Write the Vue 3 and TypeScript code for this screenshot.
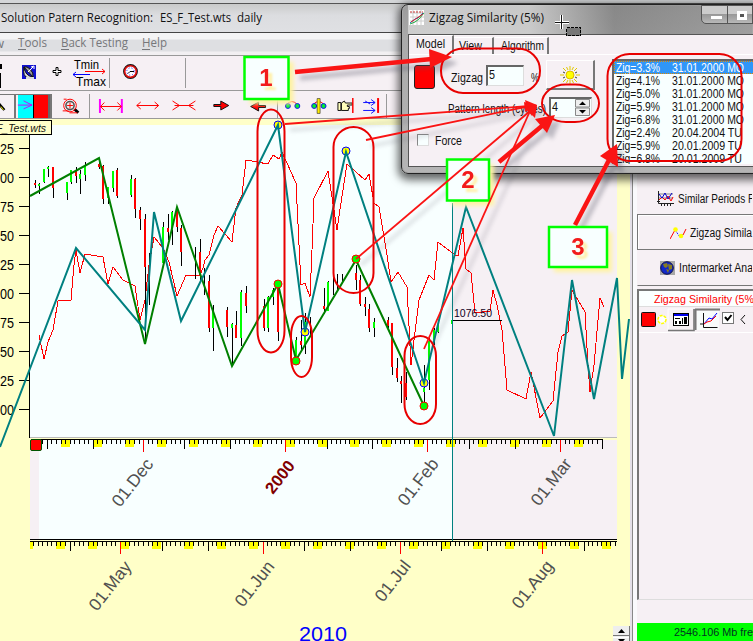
<script setup lang="ts">
import { h } from 'vue'

type FitProps = { t: string; w: number; s?: number }

// One line of text condensed or widened to a fixed width
const Fit = (p: FitProps) => {
  const s = p.s ?? 13
  return h('svg', { width: p.w, height: 16, style: 'overflow:visible;display:block;flex:none' }, [
    h('text', { x: 0, y: 12, 'font-size': s, textLength: p.w, lengthAdjust: 'spacingAndGlyphs', fill: 'currentColor' }, p.t),
  ])
}
Fit.props = ['t', 'w', 's']

const labels = ['25', '00', '75', '50', '25', '00', '75', '50', '25', '00']

// x, high, low, body top, body bottom, rising
const candles: [number, number, number, number, number, number][] = [
  [35, 180, 188, 183, 185, 0], [39, 183, 194, 184, 186, 1], [44, 169, 183, 169, 182, 1], [48, 166, 177, 167, 169, 1],
  [53, 167, 198, 167, 188, 0], [67, 182, 200, 182, 193, 1], [71, 170, 184, 170, 182, 1], [76, 167, 183, 170, 176, 0],
  [80, 170, 194, 174, 179, 1], [85, 162, 181, 165, 175, 1], [99, 162, 169, 164, 167, 0], [103, 165, 204, 166, 199, 0],
  [108, 187, 204, 187, 198, 1], [113, 171, 192, 171, 188, 1], [117, 168, 198, 170, 196, 0], [131, 175, 197, 179, 195, 1],
  [135, 178, 218, 179, 209, 0], [140, 207, 230, 210, 219, 0], [145, 214, 340, 219, 267, 0], [149, 253, 305, 265, 280, 0],
  [163, 222, 264, 227, 263, 1], [168, 214, 240, 228, 232, 0], [172, 211, 245, 212, 230, 1], [177, 207, 232, 209, 227, 0],
  [181, 225, 266, 228, 252, 0], [195, 247, 279, 262, 262, 0], [200, 239, 282, 252, 275, 0], [204, 268, 295, 275, 275, 0],
  [209, 275, 332, 281, 328, 0], [213, 305, 351, 311, 328, 1], [227, 307, 337, 310, 327, 0], [232, 323, 364, 324, 328, 1],
  [236, 311, 338, 325, 338, 0], [241, 290, 346, 292, 338, 1], [246, 286, 313, 293, 306, 0], [264, 299, 331, 306, 328, 0],
  [268, 296, 332, 297, 328, 1], [273, 288, 305, 290, 297, 1], [278, 288, 341, 288, 332, 0], [296, 337, 360, 340, 358, 1],
  [301, 320, 350, 341, 345, 0], [305, 313, 354, 322, 345, 1], [310, 317, 335, 330, 330, 0], [324, 288, 314, 306, 309, 0],
  [328, 281, 311, 282, 311, 1], [333, 277, 295, 280, 280, 0], [337, 274, 291, 280, 280, 0], [342, 274, 283, 280, 280, 0],
  [356, 265, 290, 273, 280, 0], [360, 275, 306, 280, 304, 0], [365, 297, 316, 304, 307, 0], [369, 304, 332, 309, 328, 0],
  [374, 318, 337, 322, 328, 1], [388, 317, 328, 320, 326, 0], [392, 323, 375, 323, 367, 0], [397, 358, 382, 368, 378, 0],
  [401, 376, 403, 381, 384, 0], [406, 372, 400, 383, 397, 0], [424, 365, 405, 388, 392, 1], [429, 338, 390, 341, 380, 1],
  [434, 328, 345, 330, 340, 1], [438, 322, 333, 324, 332, 1], [452, 315, 334, 320, 324, 1],
]

const pattern = '30,196 99,158 145,344 177,207 232,366 278,284 296,360 356,260 424,406'
const zigzag = '0,447 76,248 145,330 154,212 181,321 278,125 305,332 346,152 424,383 466,207 554,436 572,280 594,399 617,278 622,379 629,319'
const price =
  '39,335 44,359 48,342 53,330 58,301 71,300 74,265 76,250 80,273 85,254 103,257 108,284 113,267 123,280 135,286 140,320 145,300 149,265 154,237 163,248 169,262 177,296 186,275 200,275 203,268 205,260 209,255 214,235 218,226 232,242 236,208 242,195 246,160 268,164 273,155 279,159 282,152 296,183 301,285 305,283 310,297 312,250 314,198 328,171 337,230 339,216 347,164 365,180 369,174 374,203 379,207 387,255 391,282 398,272 407,287 411,365 419,300 429,275 434,280 438,242 455,255 458,256 463,228 466,269 471,273 475,313 490,311 493,290 497,305 502,330 507,390 526,399 531,372 540,418 553,401 558,352 562,336 568,332 572,290 585,312 588,365 590,392 594,365 600,298 604,307'

const range = (n: number) => Array.from({ length: n }, (_, i) => i)
const upperMajor = [47.5, 93.5, 184.5, 230.5, 327.5, 372.5, 469.5, 515.5, 602.5]
const lowerMajor = [70.5, 162.5, 208.5, 304.5, 350.5, 441.5, 487.5, 584.5]
const upperMonths: [number, number, number, string][] = [[143.5, 120, 508, '01.Dec'], [427.5, 406, 507, '01.Feb'], [560.5, 539, 507, '01.Mar']]
const lowerMonths: [number, number, number, string][] = [[120.5, 97, 612, '01.May'], [263.5, 243, 608, '01.Jun'], [400.5, 383, 603, '01.Jul'], [542.5, 520, 610, '01.Aug']]
// Daily ticks give way to the longer ticks of decades and months
const dayTicks = (start: number, count: number, end: number, long: number[]) =>
  range(count)
    .map((i) => Math.floor(start + i * 4.583) + 0.5)
    .filter((x) => x < end && long.every((m) => Math.abs(m - x) > 2))
const upperTicks = dayTicks(42.8, 123, 603, [...upperMajor, 285.5, ...upperMonths.map((m) => m[0])])
const lowerTicks = dayTicks(33.5, 129, 618, [...lowerMajor, ...lowerMonths.map((m) => m[0])])
const upperWeeks = range(17).map((i) => Math.round(61 + i * 32.08))
const lowerWeeks = range(18).map((i) => Math.round(56 + i * 32.1))

const yellowDots = [[278, 125], [305, 332], [346, 151], [424, 383]]
const greenDots = [[278, 284], [296, 361], [356, 259], [424, 406]]

const matches = [
  ['Zig=3.3%', '31.01.2000 MO'], ['Zig=4.1%', '31.01.2000 MO'], ['Zig=5.0%', '31.01.2000 MO'], ['Zig=5.9%', '31.01.2000 MO'],
  ['Zig=6.8%', '31.01.2000 MO'], ['Zig=2.4%', '20.04.2004 TU'], ['Zig=5.9%', '20.01.2009 TU'], ['Zig=6.8%', '20.01.2009 TU'],
]

const rings = [
  [257.5, 109.5, 27, 243, 13.5, 22], [333.5, 127, 40, 166, 20, 20], [291, 316, 21, 61, 10.5, 20], [404.5, 336, 31.5, 88, 16, 20],
  [441, 48.5, 99, 44.5, 22, 22], [542, 84.5, 57, 37.5, 24, 19], [607.5, 54, 134, 107, 22, 22],
]
const pointers = [[285, 124], [366, 140], [356, 259], [424, 349]]
const heads = ['537,105 524,102 525,112', '537,105 525,100 528,113', '537,105 525,107 532,116', '537,105 525,108 535,118']
const arrows = [
  { x1: 295, y1: 72, x2: 432, y2: 59, head: '452,57 429,49 430,68' },
  { x1: 499, y1: 162, x2: 543, y2: 125, head: '555,115 535,119 547,133' },
  { x1: 575, y1: 225, x2: 609, y2: 160, head: '617,144 600,156 618,167' },
]
const tags = [
  { x: 244.5, y: 57, w: 44, h: 42, n: '1', tx: 266, ty: 86 },
  { x: 447, y: 159.5, w: 42, h: 41, n: '2', tx: 468, ty: 188 },
  { x: 549, y: 227, w: 58, h: 40, n: '3', tx: 578, ty: 255 },
]
</script>

<template>
  <div class="app">
    <div class="sliver"></div>
    <header class="caption">
      <Fit t="Solution Patern Recognition:" :w="152" :s="13" />
      <Fit class="file" t="ES_F_Test.wts" :w="71" :s="13" />
      <Fit class="daily" t="daily" :w="25" :s="13" />
    </header>
    <nav class="menu">
      <span class="cut">w</span>
      <Fit class="mi m1" t="Tools" :w="29" :s="13" />
      <Fit class="mi m2" t="Back Testing" :w="67" :s="13" />
      <Fit class="mi m3" t="Help" :w="25" :s="13" />
    </nav>
    <div class="bar1">
      <svg width="110" height="36" viewBox="0 55 110 36" shape-rendering="crispEdges">
        <path d="M0 64.500h1v4H0M0 73h.5v14H0" stroke="#000" fill="#000" />
        <rect x="22" y="65" width="14" height="14" fill="#1010d0" />
        <g shape-rendering="auto">
          <path d="M24 67q1 9 9 10q-1 1-4 1.500q-7-2-5-11.500z" fill="#ddd" stroke="#111" />
          <path d="M24 67L33 77Q34 73 30 69Q27 66 24 67z" fill="#999" stroke="#111" />
          <path d="M28 72L33 67M31 67l3-1v3" stroke="#fff" fill="none" />
          <path d="M26 78h8" stroke="#ddd" stroke-width="2" />
          <path d="M55.500 67.500h2v3h3v2h-3v3h-2v-3h-3v-2h3z" fill="#fff" stroke="#000" transform="translate(0.500 0)" />
          <text x="74" y="69" font-size="13" textLength="25" lengthAdjust="spacingAndGlyphs">Tmin</text>
          <text x="76" y="86" font-size="13" textLength="30" lengthAdjust="spacingAndGlyphs">Tmax</text>
          <path d="M85 71.500H105M102 69l3 2.500-3 2.500" stroke="red" fill="none" />
          <path d="M73 74.500H90M76 72l-3 2.500 3 2.500" stroke="#00f" fill="none" />
        </g>
      </svg>
      <svg class="slot" width="76" height="36" viewBox="0 0 76 36">
        <circle cx="20.500" cy="16.500" r="6.500" fill="#fff" stroke="#111" stroke-width="1.800" />
        <circle cx="20.500" cy="16.500" r="5.800" fill="none" stroke="#e01010" stroke-width="1.600" />
        <circle cx="20.500" cy="16.500" r="3.700" fill="none" stroke="#22f" stroke-dasharray="1 2" />
        <path d="M24 16.500h-4l-2 2" stroke="#000" fill="none" />
      </svg>
    </div>
    <div class="bar2">
      <svg class="pressed" width="16" height="24" viewBox="0 0 16 24"><path d="M-2 8l7 8" stroke="#000" stroke-width="3" /><path d="M1 12l3 4" stroke="#ff0" /></svg>
      <svg class="pressed" width="36" height="24" viewBox="16 95 36 24" shape-rendering="crispEdges">
        <path fill="#0ff" d="M18 95h16v24H18z" /><path fill="red" d="M35 95h15v24H35z" /><path fill="#000" d="M34 95h1v24h-1z" />
        <path d="M18 105.500h15M24 101l9 4.500-9 4" stroke="#c0f" fill="none" shape-rendering="auto" /><path d="M50.500 95v24" stroke="#666" stroke-width="2" />
      </svg>
      <svg class="slot" width="38" height="24" viewBox="52 95 38 24">
        <path d="M75 110l4 4" stroke="#000" stroke-width="3" /><circle cx="70.500" cy="106.500" r="6.500" fill="none" stroke="red" />
        <circle cx="70.500" cy="106.500" r="4.200" fill="#eee" stroke="#555" stroke-width="1.600" /><path d="M67.500 106.500h6M70.500 103.500v6M64 100h3M63 112h6M70 114h8" stroke="red" />
      </svg>
      <svg class="slot" width="188" height="24" viewBox="91 95 188 24">
        <path d="M101 100v14M123 100v14" stroke="#f0f" stroke-width="2" />
        <g stroke="red" fill="none">
          <path d="M102 107.500h20M105.500 103.500l-4 4 4 4M118.500 103.500l4 4-4 4M138 106.500h22M142 103l-4 3.500 4 3.500M156 103l4 3.500-4 3.500M176 106.500h19M174 102l7 4.500-7 4.500M197 102l-7 4.500 7 4.500" />
        </g>
        <path d="M215.500 105.500h7v-3.500l8 4.500-8 4.500v-3.500h-7z" fill="red" stroke="#111" />
        <path d="M267.500 106.500h-7v-3.500l-8 4.500 8 4.500v-3.500h7z" fill="red" stroke="#111" />
      </svg>
      <svg class="slot" width="109" height="24" viewBox="280 95 109 24">
        <path d="M289 105q5-5 10 0M316 105q5-5 10 0" fill="none" stroke="red" />
        <g fill="#0e3" stroke="#11e"><circle cx="290" cy="107" r="2.500" /><circle cx="299.500" cy="107" r="2.500" /><circle cx="316.500" cy="107" r="2.500" /><circle cx="326" cy="107" r="2.500" /></g>
        <path d="M319.500 99.500h3v15h-3z" fill="#fe0" stroke="#222" stroke-width=".6" />
        <path d="M340.500 103.500h3v8h-3zM344 104l3-2 1 2h7v2h-5v1.500h2v2h-1v2h-7z" fill="#ffb" stroke="#111" />
        <path d="M355.500 99v15" stroke="red" stroke-width="1.500" />
        <path d="M366 103.500h12M366 111.500h12M374 100.500l4 3-4 3M374 108.500l4 3-4 3M368 102l5 3" fill="none" stroke="#11f" />
        <path d="M381 99v15" stroke="red" stroke-width="2" />
      </svg>
    </div>

    <main class="body">
      <svg class="chart" width="630" height="522" viewBox="0 119 630 522">
        <path d="M30 125h587v313H30zM30 440h587v99H30z" fill="#f8ffff" />
        <path d="M453 125h164v313H453zM453 440h164v99H453zM30 440h9v99h-9z" fill="#f6f0f4" />
        <g shape-rendering="crispEdges" stroke="#000">
          <path d="M29.500 134V438" />
          <path v-for="(l, i) in labels" :key="i" :d="`M19 ${148.500 + i * 29}H29`" />
          <path d="M30 437.500H617" stroke="#bbb" />
          <path v-for="x in upperWeeks" :key="'w' + x" :d="`M${x} 440h9v7h-9z`" fill="#ff0" stroke="none" />
          <path v-for="x in lowerWeeks" :key="'v' + x" :d="`M${x} 542h9v7h-9z`" fill="#ff0" stroke="none" />
          <path d="M30 542h3v7h-3z" fill="#ff0" stroke="none" />
          <path d="M31 439.500H603M30 539.500H617M30 541.500H617" />
          <path v-for="x in upperTicks" :key="'a' + x" :d="`M${x} 440v4`" />
          <path v-for="x in lowerTicks" :key="'b' + x" :d="`M${x} 542v4`" />
          <path v-for="x in upperMajor" :key="'c' + x" :d="`M${x} 440v9`" />
          <path v-for="x in lowerMajor" :key="'d' + x" :d="`M${x} 542v9`" />
          <path v-for="m in upperMonths" :key="m[3]" :d="`M${m[0]} 440v12`" stroke="red" />
          <path d="M285.500 440v12" stroke="red" />
          <path v-for="m in lowerMonths" :key="m[3]" :d="`M${m[0]} 542v12`" stroke="red" />
        </g>
        <g font-size="15"><text v-for="(l, i) in labels" :key="i" x="0" :y="154 + i * 29" textLength="14" lengthAdjust="spacingAndGlyphs">{{ l }}</text></g>
        <g font-size="17.500" fill="#505050">
          <text v-for="m in [...upperMonths, ...lowerMonths]" :key="m[3]" :transform="`translate(${m[1]} ${m[2]}) rotate(-52)`">{{ m[3] }}</text>
        </g>
        <text transform="translate(273 495) rotate(-52)" font-size="16.500" font-weight="bold" fill="#800000">2000</text>
        <text x="299" y="641" font-size="19.500" fill="#00f" textLength="48" lengthAdjust="spacingAndGlyphs">2010</text>
        <g shape-rendering="crispEdges">
          <polyline :points="price" fill="none" stroke="red" />
          <template v-for="c in candles" :key="c[0]">
            <path :d="`M${c[0] + 0.5} ${c[1]}V${c[2]}`" stroke="#000" />
            <path :d="`M${c[0]} ${c[3]}V${c[4]}`" :stroke="c[5] ? '#0f0' : 'red'" stroke-width="2" />
          </template>
          <path d="M452.500 203V541" stroke="#008080" />
          <path d="M453 320.500h49" stroke="#000" />
        </g>
        <polyline :points="pattern" class="zz" stroke="#008000" />
        <g stroke="red" fill="#0f0"><circle v-for="d in greenDots" :key="d[0]" :cx="d[0]" :cy="d[1]" r="4" /></g>
        <g stroke="#00f" fill="#ff0"><circle v-for="d in yellowDots" :key="d[0]" :cx="d[0]" :cy="d[1]" r="4" /></g>
        <polyline :points="zigzag" class="zz" stroke="#008080" />
        <text x="454" y="317" font-size="11.500" textLength="38" lengthAdjust="spacingAndGlyphs" fill="#102">1076.50</text>
        <rect x="30.500" y="439.500" width="11" height="11" rx="1.500" fill="red" stroke="#050" />
        <g shape-rendering="crispEdges">
          <path d="M613 626h16v15h-16z" fill="#eee" /><path d="M629.500 626v15M613 635.500h16" stroke="#777" /><path d="M613 637.500h16" stroke="#fff" />
        </g>
        <path d="M618 633l3.500-4 3.500 4zM618 639h7l-3.500 4z" />
      </svg>
      <div class="splitter"></div>
      <aside class="side">
        <div class="tool t1">
          <svg width="17" height="15" viewBox="0 0 17 15"><path d="M1.500 0v12.500H17M4.500 12v3M7.500 12v3M10.500 12v3M13.500 12v3M0 10.500h3" stroke="#222" fill="none" /><path d="M2 3h14M2 7h14" stroke="#888" /><path d="M2 9l3-3 3 3 3-4 3 5 2-4" stroke="red" fill="none" /><path d="M2 3l3 4 3-5 3 6 4-6" stroke="#00c" fill="none" /></svg>
          <Fit class="g4" t="Similar Periods F" :w="76" :s="12.500" />
        </div>
        <div class="tool t2">
          <svg width="17" height="13" viewBox="0 0 17 13"><path d="M0 12L5 3M13 8l3-6" stroke="red" fill="none" /><path d="M5 3l5 7 3-3" stroke="#22f" fill="none" stroke-dasharray="2 1" /><circle cx="5.500" cy="2.500" r="2.300" fill="#ff0" /><circle cx="11" cy="9" r="2.300" fill="#ff0" /></svg>
          <Fit class="g3" t="Zigzag Simila" :w="62" :s="12.500" />
        </div>
        <div class="tool t3">
          <svg width="15" height="14" viewBox="0 0 15 14"><path fill="#a8a8a8" d="M0 0h15v14H0z" /><circle cx="7" cy="7" r="6.300" fill="#1128c8" stroke="#114" /><path d="M3 3l4-1 1 3-2 2-2-1zM8 3l4 1v4l-3 1zM6 8l3 1-1 3z" fill="#887b20" /></svg>
          <Fit class="g4" t="Intermarket Ana" :w="74" :s="12.500" />
        </div>
        <section class="panel">
          <div class="ptitle"><Fit t="Zigzag Similarity (5%" :w="100" :s="11.500" /></div>
          <div class="ptools">
            <svg width="115" height="24" viewBox="639 309 115 24">
              <rect x="641.500" y="313.500" width="14" height="14" rx="1" fill="red" stroke="#111" />
              <circle cx="662" cy="320.500" r="4" fill="#fff" stroke="#ff0" stroke-width="1.500" stroke-dasharray="3 1" />
              <path d="M668 331V310h25" stroke="#fff" fill="none" /><path d="M668 331.500h26V310" stroke="#777" stroke-width="1.600" fill="none" />
              <g shape-rendering="crispEdges"><path d="M673.500 314.500h15v12h-15z" fill="#fff" stroke="#000" /><path d="M674 315h14v2h-14z" fill="#00e" /><path d="M675 319h5v1h-5zM675 322h2v3h-2zM679 322h2v3h-2zM682 319h1v6h-1zM684 318h3v7h-3z" fill="#000" /></g>
              <path d="M695 310.500h25M695.500 310v21" stroke="#777" stroke-width="2" /><path d="M697 312h22v19h-22z" fill="#f8fbfb" />
              <path d="M703.500 314v14.500h14M700 325h4" stroke="#111" fill="none" /><path d="M704 325l5-6 3 1 5-6" stroke="#00f" fill="none" /><path d="M704 325l3-2 4-1 5-5" stroke="red" fill="none" />
              <rect x="722.500" y="313.500" width="11" height="11" fill="#fff" stroke="#777" /><path d="M725 318l2.500 3 4-5" stroke="#000" stroke-width="2" fill="none" />
              <path d="M745 316l-4 4.500 4 4.500" stroke="#111" fill="none" />
            </svg>
          </div>
        </section>
        <div class="gap"></div>
        <footer class="memory"><Fit t="2546.106 Mb fre" :w="79" :s="11.500" /></footer>
      </aside>
    </main>

    <div class="hint"><Fit t="F_Test.wts" :w="50" :s="11.500" /></div>

    <div class="dialog">
      <div class="dcap">
        <svg width="16" height="16" viewBox="0 0 16 16"><path fill="#fff" d="M0 0h15v15H0z" /><path d="M1 3h14M1 7h14M1 11h14M4 0v15M8 0v15M12 0v15" stroke="#ccc" /><path d="M1 2h13" stroke="#c33" stroke-dasharray="2 1" /><path d="M1 13l5-4 3-1 5-5" stroke="#16c" fill="none" /><path d="M1 14l5-2 4-3 5-6" stroke="#2a4" fill="none" /><path d="M2 12l6-4 6-4" stroke="#d22" fill="none" /></svg>
        <Fit class="dt" t="Zigzag Similarity (5%)" :w="115" :s="13" />
        <div class="winbtns"><i class="min"></i><i class="max"></i></div>
      </div>
      <div class="dbody">
        <div class="tabs">
          <div class="tab on"><Fit t="Model" :w="29" :s="12.500" /></div>
          <div class="tab"><Fit t="View" :w="23" :s="12.500" /></div>
          <div class="tab wide"><Fit t="Algorithm" :w="43" :s="12.500" /></div>
        </div>
        <div class="page">
          <div class="form">
            <div class="row r1">
              <span class="swatch"></span>
              <Fit class="lz" t="Zigzag" :w="32" :s="12.500" />
              <span class="field f1"><Fit t="5" :w="6" :s="12.500" /></span>
              <Fit class="pc" t="%" :w="8" :s="12.500" />
              <span class="run">
                <svg width="20" height="18" viewBox="0 0 20 18"><path d="M10 0v4M10 14v4M0 9h4M16 9h4M3 2l3 3M17 2l-3 3M3 16l3-3M17 16l-3-3M6.500 1l1.500 3M13.500 1L12 4M6.500 17L8 14M13.500 17L12 14" stroke="#e0c800" /><path d="M3 6l2 1M3 12l2-1M17 6l-2 1M17 12l-2-1" stroke="#443" /><circle cx="10" cy="9" r="4" fill="#ff0" stroke="#db0" /></svg>
              </span>
            </div>
            <div class="row r2">
              <Fit t="Pattern length (cycles)" :w="98" :s="12.500" />
              <span class="field f2"><Fit t="4" :w="6" :s="12.500" />
                <svg width="15" height="17" viewBox="0 0 15 17"><path fill="#eee" stroke="#888" d="M.5.500h14v7.500H.5zM.5 9h14v7.500H.5z" /><path d="M4 6h7L7.500 2.500zM4 11h7l-3.500 3.500z" /></svg>
              </span>
            </div>
            <div class="row r3"><span class="check"></span><Fit t="Force" :w="27" :s="12.500" /></div>
          </div>
          <ul class="list">
            <li v-for="(m, i) in matches" :key="i" :class="{ sel: i === 0 }">
              <Fit :t="m[0]" :w="44" :s="12.500" /><Fit :t="m[1]" :w="m[1].endsWith('U') ? 70 : 72" :s="12.500" />
            </li>
          </ul>
        </div>
      </div>
    </div>

    <svg class="marks" width="753" height="641" viewBox="0 0 753 641">
      <defs>
        <filter id="soft" x="-20%" y="-20%" width="140%" height="140%"><feGaussianBlur stdDeviation="2" /></filter>
      </defs>
      <g filter="url(#soft)" opacity=".35" transform="translate(5 6)" stroke="#556" fill="#556">
        <path v-for="p in pointers" :key="p[0]" :d="`M${p[0]} ${p[1]}L537 105`" stroke-width="3" opacity=".6" />
        <template v-for="a in arrows" :key="a.x1"><path :d="`M${a.x1} ${a.y1}L${a.x2} ${a.y2}`" stroke-width="5" /><polygon :points="a.head" /></template>
      </g>
      <rect v-for="t in tags" :key="'s' + t.n" :x="t.x + 5" :y="t.y + 5" :width="t.w" :height="t.h" fill="#fff3a0" filter="url(#soft)" />
      <g v-for="t in tags" :key="t.n">
        <rect :x="t.x" :y="t.y" :width="t.w" :height="t.h" fill="#f8ffff" stroke="#0f0" stroke-width="2.500" />
        <text :x="t.tx" :y="t.ty" class="num" fill="#f21b1b">{{ t.n }}</text>
      </g>
      <g fill="none" stroke="#e80000" stroke-width="2">
        <rect v-for="r in rings" :key="r[0]" :x="r[0]" :y="r[1]" :width="r[2]" :height="r[3]" :rx="r[4]" :ry="r[5]" />
      </g>
      <g stroke="#fa1414" fill="#fa1414">
        <path v-for="p in pointers" :key="p[0]" :d="`M${p[0]} ${p[1]}L530 ${p[1] > 200 ? 111 : 106}`" stroke-width="1.800" />
        <polygon v-for="p in heads" :key="p" :points="p" stroke="none" />
        <template v-for="a in arrows" :key="a.x1"><path :d="`M${a.x1} ${a.y1}L${a.x2} ${a.y2}`" stroke-width="4.500" /><polygon :points="a.head" stroke="none" /></template>
      </g>
      <g shape-rendering="crispEdges">
        <path d="M561.500 15v14M555 22.500h14" stroke="#fff" stroke-width="3" /><path d="M561.500 15v14M555 22.500h14" stroke="#111" />
        <rect x="566.500" y="27.500" width="14" height="8" fill="#777" stroke="#000" stroke-dasharray="3 1" />
      </g>
    </svg>
  </div>
</template>

<style>
body { margin: 0; overflow: hidden; }
</style>

<style scoped>
.app { position: relative; width: 753px; height: 641px; overflow: hidden; background: #f6f0f4; font-family: "Liberation Sans", Arial, sans-serif; color: #111; }
.app * { box-sizing: border-box; }
.app svg { flex: none; display: block; }
.sliver { height: 3px; background: #d4d6d8; }
.caption { height: 30px; display: flex; align-items: flex-start; padding: 6px 0 0 1px; border-top: 1px solid #555; border-bottom: 1px solid #444; background: linear-gradient(#c9caca, #dcdde0 40%, #dfe0e3); font-family: "Open Sans", sans-serif; }
.file { margin-left: 7px; }
.daily { margin-left: 6px; }
.menu { height: 22px; display: flex; align-items: flex-start; padding-top: 2px; color: #76777a; background: linear-gradient(#f4f4f5 0 6px, #dedfe2 7px 18px, #f2f0f2 19px); font-family: "Open Sans", sans-serif; font-size: 13px; line-height: 16px; }
.cut { width: 18px; margin-left: -6px; }
.m1 { margin-left: 6px; }
.m2 { margin-left: 14px; }
.m3 { margin-left: 14px; }
.mi { background: linear-gradient(#76777a, #76777a) 0 14px / 8px 1px no-repeat; }
.bar1 { height: 36px; display: flex; border-top: 1px solid #999; border-bottom: 1px solid #999; }
.bar1 > svg { margin-top: -1px; background: linear-gradient(#999, #999) right 3px / 1px 30px no-repeat; }
.bar2 { height: 28px; display: flex; padding-top: 3px; border-bottom: 1px solid #999; }
.bar2 > svg { border-right: 1px solid #999; }
.bar2 .pressed { border-top: 1px solid #777; border-right: 2px solid #777; }
.body { height: 522px; display: flex; }
.chart { background: #ffffc8; overflow: hidden; }
.zz { fill: none; stroke-width: 2; }
.splitter { width: 7px; border-left: 2px solid #e4e0e8; background: linear-gradient(90deg, #888 1px, #fafafc 1px); }
.side { width: 116px; display: flex; flex-direction: column; padding-top: 60px; overflow: hidden; }
.tool { display: flex; align-items: center; overflow: hidden; border: 1px solid transparent; }
.t1 { height: 35px; padding: 4px 0 0 19px; }
.t2 { height: 36px; padding: 2px 0 0 32px; border: 1px solid #777; border-right: 0; box-shadow: inset 1px 1px #fff; }
.t3 { height: 36px; padding-left: 22px; margin-bottom: 2px; border-bottom: 1px solid #777; }
.g4 { margin-left: 4px; }
.g3 { margin-left: 3px; }
.panel { margin-top: 1px; height: 311px; border: 2px solid #777; border-right: 0; border-bottom: 1px solid #ddd; }
.ptitle { height: 16px; padding-left: 15px; color: #f00; background: #fbffff; border-bottom: 1px solid #ddd; }
.ptools { height: 26px; padding-top: 1px; border-bottom: 1px solid #fff; }
.gap { height: 23px; }
.memory { height: 18px; background: #0f0; padding: 1px 0 0 37px; color: #032; }
.hint { position: absolute; left: 0; top: 120px; width: 52px; height: 15px; background: #ffffc8; border: 1px solid #000; border-left: 0; font-style: italic; overflow: hidden; }
.hint svg { margin: -1px 0 0 -4px; }
.dialog { position: absolute; left: 401px; top: 4px; width: 372px; height: 170px; border: 1px solid #222; border-radius: 7px; background: linear-gradient(#9b9b9b, #aaa 20%, #b5b5b5); box-shadow: 0 0 0 1px #aaa inset, 0 3px 9px 3px rgba(0, 0, 0, .6); padding: 0 0 0 6px; }
.dcap { height: 29px; display: flex; padding: 5px 0 0 1px; margin-right: 20px; background: linear-gradient(90deg, rgba(215, 215, 215, .8), rgba(215, 215, 215, .75) 35%, rgba(120, 120, 120, .55) 60%, rgba(150, 150, 150, .5)); font-family: "Open Sans", sans-serif; }
.dt { margin-left: 4px; }
.winbtns { display: flex; margin: -5px 0 0 auto; width: 53px; height: 19px; border: 1px solid #555; border-radius: 0 0 0 5px; background: linear-gradient(#ccc 45%, #999 50%, #b8b8b8); }
.winbtns { position: relative; left: 2px; }
.winbtns i { width: 29px; border-right: 1px solid #555; }
.min { background: linear-gradient(#fff, #fff) 9px 10px / 11px 3px no-repeat; }
.max { background: linear-gradient(#555, #555) 12px 8px / 4px 3px no-repeat, linear-gradient(#fff, #fff) 9px 5px / 10px 9px no-repeat; }
.dbody { height: 133px; background: #f6f0f4; border: 1px solid #555; }
.tabs { height: 20px; display: flex; align-items: flex-end; padding-left: 1px; border-bottom: 1px solid #fff; }
.tab { height: 17px; width: 40px; padding: 0 0 0 5px; border-right: 2px solid #777; border-top: 1px solid #fff; }
.tab.on { width: 44px; height: 19px; padding: 0 0 0 6px; }
.tab.wide { width: 54px; padding-left: 6px; margin-left: 1px; }
.page { display: flex; padding-top: 4px; height: 111px; }
.form { width: 203px; flex: none; }
.row { display: flex; align-items: flex-start; }
.r1 { height: 37px; padding-left: 5px; }
.swatch { width: 21px; height: 24px; margin-top: 6px; background: #f00; border: 1px solid #222; border-radius: 3px; }
.lz { margin: 11px 3px 0 16px; }
.field { display: flex; justify-content: space-between; background: #f8ffff; border: 2px solid #666; border-right: 1px solid #ddd; border-bottom: 1px solid #ddd; }
.f1 { width: 38px; height: 21px; margin-top: 6px; padding: 0 1px; }
.pc { margin: 11px 0 0 7px; }
.run { width: 49px; height: 30px; margin: 1px 0 0 7px; display: grid; place-items: center; border: 1px solid #fff; border-right: 2px solid #777; border-bottom: 2px solid #777; }
.r2 { padding-left: 39px; height: 37px; padding-top: 1px; }
.r2 > svg { margin-top: 4px; }
.f2 { width: 43px; height: 21px; margin-left: 3px; padding: 0 1px; }
.r3 { padding-left: 8px; }
.check { width: 12px; height: 12px; margin: 1px 6px 0 0; background: #f8ffff; border: 1px solid #888; border-right-color: #ddd; border-bottom-color: #ddd; }
.list { margin: 0; padding: 0; width: 160px; height: 105px; overflow: hidden; list-style: none; background: #f8ffff; border-left: 2px solid #666; border-top: 2px solid #666; }
.list li { height: 13px; display: flex; gap: 12px; padding-left: 2px; }
.list li svg { margin-top: -1px; }
.list .sel { background: #3096f8; color: #fff; outline: 1px dotted #d80; outline-offset: -1px; }
.marks { position: absolute; left: 0; top: 0; }
.num { font-size: 24px; font-weight: bold; text-anchor: middle; filter: drop-shadow(4px 4px 1px #fff0a8); }
</style>
